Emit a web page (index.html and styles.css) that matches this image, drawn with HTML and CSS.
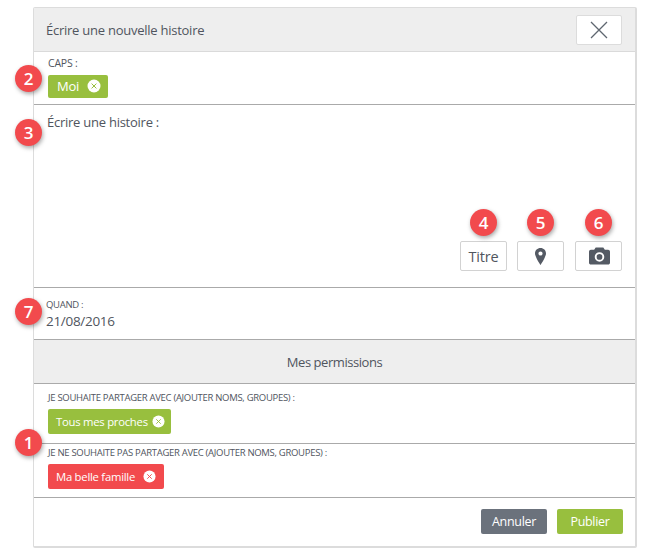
FILE: index.html
```html
<!DOCTYPE html>
<html lang="fr">
<head>
<meta charset="utf-8">
<title>Écrire une nouvelle histoire</title>
<link rel="stylesheet" href="styles.css">
</head>
<body>
<main class="dialog">
  <header class="head">
    <h1 class="title">Écrire une nouvelle histoire</h1>
    <button class="close" aria-label="Fermer">
      <svg width="18" height="18" viewBox="0 0 18 18"><path d="M1 1 17 17M17 1 1 17" fill="none" stroke="#5f6670" stroke-width="1.3"/></svg>
    </button>
  </header>

  <section class="caps">
    <span class="marker m2">2</span>
    <div class="label caps-label">CAPS :</div>
    <span class="tag green tag-moi">Moi
      <svg class="x" width="14" height="14" viewBox="0 0 14 14"><circle cx="7" cy="7" r="6.500" fill="#fff"/><path d="M4.600 4.600 9.400 9.400M9.400 4.600 4.600 9.400" stroke="#98bf3e" stroke-width="1"/></svg>
    </span>
  </section>

  <section class="story">
    <span class="marker m3">3</span>
    <div class="story-label">Écrire une histoire :</div>
    <div class="tools">
      <div class="tool tool-title"><span class="marker mt">4</span>Titre</div>
      <div class="tool tool-pin"><span class="marker mt">5</span>
        <svg width="11" height="17" viewBox="0 0 11 17"><path fill-rule="evenodd" fill="#545a64" d="M5.500 0C2.400 0 0 2.400 0 5.400 0 9 5.500 17 5.500 17S11 9 11 5.400C11 2.400 8.600 0 5.500 0ZM5.500 3.400a2.100 2.100 0 1 1 0 4.200 2.100 2.100 0 0 1 0-4.200Z"/></svg>
      </div>
      <div class="tool tool-cam"><span class="marker mt">6</span>
        <svg class="cam" width="21" height="18" viewBox="0 0 22 18"><path fill-rule="evenodd" fill="#545a64" d="M7 0h8l1.600 2.500H20c1.100 0 2 .9 2 2V16c0 1.100-.9 2-2 2H2c-1.100 0-2-.9-2-2V4.500c0-1.100.9-2 2-2h3.400ZM11 5a5 5 0 1 0 0 10 5 5 0 0 0 0-10Zm0 2a3 3 0 1 1 0 6 3 3 0 0 1 0-6Z"/></svg>
      </div>
    </div>
  </section>

  <section class="when">
    <span class="marker m7">7</span>
    <div class="label when-label">QUAND :</div>
    <div class="date">21/08/2016</div>
  </section>

  <div class="perm">Mes permissions</div>

  <section class="share">
    <div class="label">JE SOUHAITE PARTAGER AVEC (AJOUTER NOMS, GROUPES) :</div>
    <span class="tag green tag-wide">Tous mes proches
      <svg class="x" width="13" height="13" viewBox="0 0 14 14"><circle cx="7" cy="7" r="6.500" fill="#fff"/><path d="M4.600 4.600 9.400 9.400M9.400 4.600 4.600 9.400" stroke="#98bf3e" stroke-width="1"/></svg>
    </span>
  </section>

  <section class="noshare">
    <span class="marker m1">1</span>
    <div class="label">JE NE SOUHAITE PAS PARTAGER AVEC (AJOUTER NOMS, GROUPES) :</div>
    <span class="tag red tag-wide">Ma belle famille
      <svg class="x" width="13" height="13" viewBox="0 0 14 14"><circle cx="7" cy="7" r="6.500" fill="#fff"/><path d="M4.600 4.600 9.400 9.400M9.400 4.600 4.600 9.400" stroke="#f24a4d" stroke-width="1"/></svg>
    </span>
  </section>

  <footer class="foot">
    <button class="btn grey">Annuler</button>
    <button class="btn lime">Publier</button>
  </footer>
</main>
</body>
</html>
```
FILE: styles.css
```css
* { box-sizing: border-box; }
html, body { margin: 0; padding: 0; background: #fff; }
body {
  width: 650px;
  height: 557px;
  overflow: hidden;
  padding: 7px 0 0 33px;
  font-family: "Open Sans", "Liberation Sans", sans-serif;
  color: #50555e;
}
.dialog {
  width: 604px;
  height: 541px;
  border: 1px solid #dcdcdc;
  border-right-width: 2px;
  border-bottom-width: 2px;
  border-radius: 2px;
  display: flex;
  flex-direction: column;
  background: #fff;
}
.head {
  height: 44px;
  flex: none;
  background: #eeeeee;
  border-bottom: 1px solid #dadada;
  display: flex;
  align-items: center;
  justify-content: space-between;
  padding: 0 13px 0 12px;
}
.title {
  margin: 0;
  font-size: 13px;
  font-weight: 400;
  letter-spacing: -0.25px;
}
.close {
  width: 46px;
  height: 30px;
  padding: 0;
  background: #fff;
  border: 1px solid #dcdcdc;
  border-radius: 2px;
  display: flex;
  align-items: center;
  justify-content: center;
}
section { position: relative; flex: none; border-bottom: 1px solid #aaaaaa; }
.label {
  font-size: 9.500px;
  line-height: 12px;
  letter-spacing: -0.3px;
  color: #50555e;
}
.caps-label { font-size: 10.500px; letter-spacing: -0.2px; }
.caps { height: 53px; padding: 5px 14px 0; }
.tag {
  display: inline-flex;
  align-items: center;
  justify-content: space-between;
  height: 24px;
  color: #fff;
  border-radius: 2px;
  letter-spacing: -0.25px;
  font-size: 12px;
  white-space: nowrap;
}
.tag-moi { width: 60px; height: 23px; margin-top: 6px; padding: 0 7px 1px 9px; font-size: 13px; }
.tag-wide { height: 25px; margin-top: 5px; padding: 0 6px 0 8px; font-size: 11.300px; }
.share .tag-wide { width: 123px; }
.noshare .tag-wide { width: 116px; padding-right: 8px; }
.green { background: #98bf3e; }
.red { background: #f24a4d; }
.x { flex: none; }
.story { height: 183px; padding: 8px 13px 0; }
.story-label { font-size: 13px; line-height: 18px; letter-spacing: -0.25px; }
.tools {
  position: absolute;
  top: 136px;
  right: 13px;
  display: flex;
}
.tool {
  position: relative;
  height: 30px;
  background: #fff;
  border: 1px solid #d2d2d2;
  border-radius: 2px;
  display: flex;
  align-items: center;
  justify-content: center;
  font-size: 14.500px;
  letter-spacing: -0.2px;
}
.tool-title { width: 47px; margin-right: 10px; }
.tool-pin { width: 47px; margin-right: 11px; }
.tool-cam { width: 47px; }
.cam { margin-left: 2px; }
.when { height: 52px; padding: 11px 12px 0; }
.when-label { line-height: 12px; }
.date { font-size: 13.500px; line-height: 20px; letter-spacing: -0.3px; }
.perm {
  height: 44px;
  flex: none;
  background: #eeeeee;
  border-bottom: 1px solid #aaaaaa;
  display: flex;
  align-items: center;
  justify-content: center;
  font-size: 13px;
  letter-spacing: -0.45px;
}
.share { height: 60px; padding: 8px 14px 0; }
.noshare { height: 54px; padding: 3px 14px 0; }
.foot {
  flex: 1;
  display: flex;
  justify-content: flex-end;
  align-items: flex-start;
  gap: 10px;
  padding: 11px 12px 0 0;
}
.btn {
  width: 66px;
  height: 25px;
  padding: 0;
  border: none;
  border-radius: 2px;
  color: #fff;
  font-family: inherit;
  font-size: 12.500px;
  letter-spacing: -0.3px;
}
.grey { background: #6b727c; }
.lime { background: #98bf3e; }
.marker {
  position: absolute;
  width: 27px;
  height: 27px;
  border-radius: 50%;
  background: #f24a4d;
  color: #fff;
  font-size: 17px;
  font-weight: 600;
  display: flex;
  align-items: center;
  justify-content: center;
  box-shadow: 1px 2px 4px rgba(0, 0, 0, .35);
}
.m2 { left: -19px; top: 13px; }
.m3 { left: -19px; top: 14px; }
.m7 { left: -19px; top: 10px; }
.m1 { left: -19px; top: -15px; }
.mt { top: -33px; left: 9px; }
```
